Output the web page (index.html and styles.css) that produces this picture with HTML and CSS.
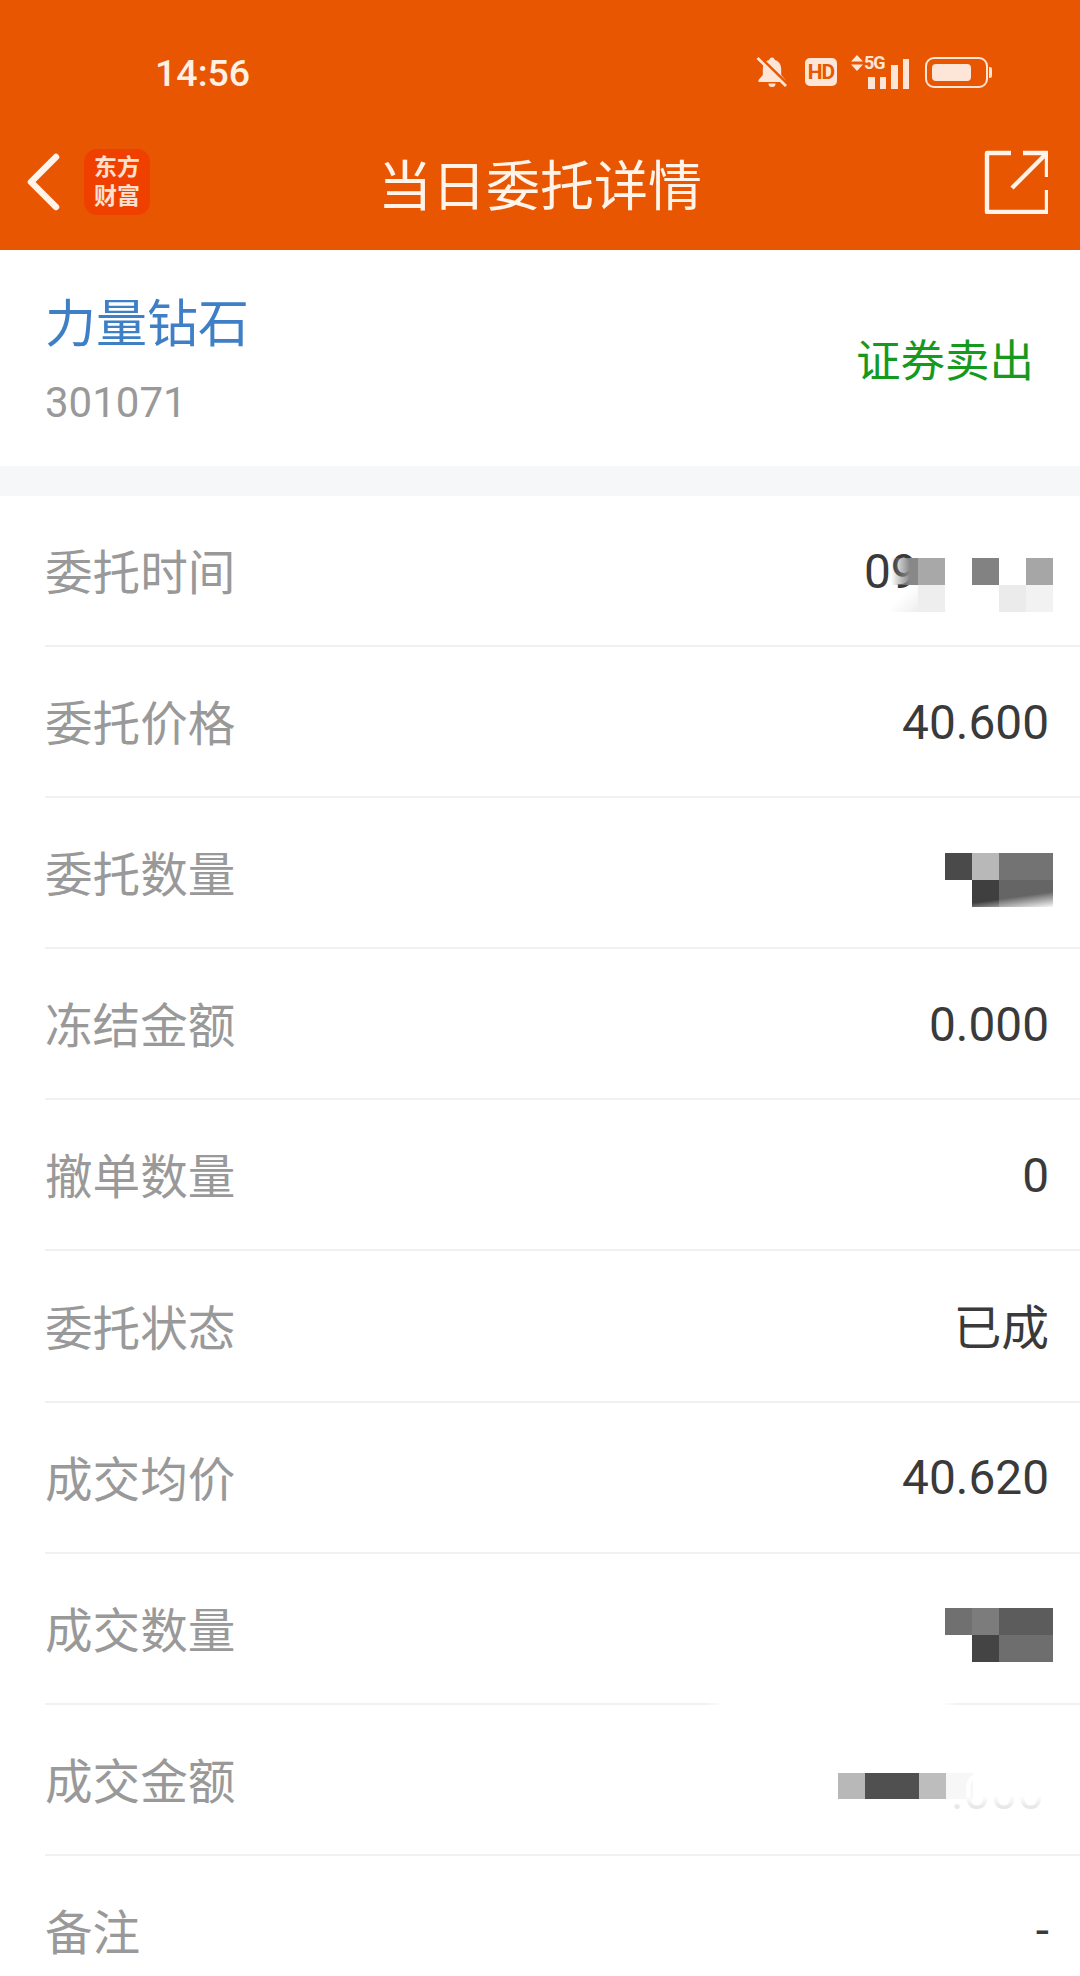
FILE: index.html
```html
<!DOCTYPE html>
<html lang="zh-CN">
  <head>
    <meta charset="UTF-8">
    <meta name="viewport" content="width=device-width, initial-scale=1.0">
    <link rel="stylesheet" href="styles.css">
    <title>当日委托详情</title>
  </head>
  <body>
    <div class="page">
      <header class="header">
        <div class="status">
          <span class="clock">14:56</span>
          <div class="status-icons">
            <svg class="ic-bell" width="32" height="32" viewBox="0 0 32 32">
              <path d="M16 1.500c-1.500 0-2.600 1-2.800 2.400C9 5 6.800 8.500 6.800 13v6L2.500 24v2h27v-2l-4.300-5v-6c0-4.500-2.200-8-6.400-9.100-.2-1.400-1.300-2.400-2.800-2.400z" fill="#fde5d8"/>
              <path d="M12.500 27.500h7a3.500 3.500 0 0 1-7 0z" fill="#fde5d8"/>
              <path d="M3.500 1l28 27" stroke="#e85602" stroke-width="3"/>
              <path d="M1.500 2l28.500 28" stroke="#fde5d8" stroke-width="2.800"/>
            </svg>
            <span class="hd">HD</span>
            <div class="signal">
              <svg class="ic-arrows" width="16" height="16" viewBox="0 0 16 16">
                <path d="M8 0l6 6.500H2zM8 16l6-6.500H2z" fill="#fde5d8"/>
              </svg>
              <span class="net">5G</span>
              <div class="bars">
                <i class="bar b1"></i>
                <i class="bar b2"></i>
                <i class="bar b3"></i>
                <i class="bar b4"></i>
              </div>
            </div>
            <div class="battery">
              <div class="battery-body"><div class="battery-level"></div></div>
              <div class="battery-nub"></div>
            </div>
          </div>
        </div>
        <nav class="nav">
          <div class="nav-left">
            <svg class="ic-back" width="36" height="58" viewBox="0 0 36 58">
              <path d="M31 4L6 29l25 25" fill="none" stroke="#fff3ea" stroke-width="6.500" stroke-linecap="round" stroke-linejoin="round"/>
            </svg>
            <div class="logo"><span>东方</span><span>财富</span></div>
          </div>
          <h1 class="title">当日委托详情</h1>
          <div class="nav-right">
            <svg class="ic-share" width="64" height="64" viewBox="0 0 64 64">
              <path d="M27 3H3v59h60V40M39 3h24v24M63 3L28 38" fill="none" stroke="#fff3ea" stroke-width="4.400" stroke-linejoin="round"/>
            </svg>
          </div>
        </nav>
      </header>

      <section class="stock">
        <div>
          <h2 class="stock-name">力量钻石</h2>
          <p class="stock-code">301071</p>
        </div>
        <span class="stock-side">证券卖出</span>
      </section>
      <div class="band"></div>

      <ul class="rows">
        <li class="row">
          <span class="label">委托时间</span>
          <span class="value value-time">09
            <span class="mosaic mosaic-time">
              <i class="c c-fade"></i><i class="c c-a8"></i><i class="c"></i><i class="c c-82"></i><i class="c"></i><i class="c c-a6"></i>
              <i class="c c-fade2"></i><i class="c c-ee"></i><i class="c"></i><i class="c"></i><i class="c c-eb"></i><i class="c c-f2"></i>
            </span>
          </span>
        </li>
        <li class="row"><span class="label">委托价格</span><span class="value">40.600</span></li>
        <li class="row">
          <span class="label">委托数量</span>
          <span class="mosaic">
            <i class="c c-4a"></i><i class="c c-b8"></i><i class="c c-73"></i><i class="c c-73"></i>
            <i class="c"></i><i class="c c-blur"></i>
          </span>
        </li>
        <li class="row"><span class="label">冻结金额</span><span class="value">0.000</span></li>
        <li class="row"><span class="label">撤单数量</span><span class="value">0</span></li>
        <li class="row"><span class="label">委托状态</span><span class="value value-cjk">已成</span></li>
        <li class="row"><span class="label">成交均价</span><span class="value">40.620</span></li>
        <li class="row row-gap">
          <span class="label">成交数量</span>
          <span class="mosaic">
            <i class="c c-70"></i><i class="c c-7c"></i><i class="c c-5c"></i><i class="c c-5c"></i>
            <i class="c"></i><i class="c c-44"></i><i class="c c-6e"></i><i class="c c-6e"></i>
          </span>
        </li>
        <li class="row">
          <span class="label">成交金额</span>
          <span class="mosaic mosaic-line">
            <i class="c c-b8"></i><i class="c c-50"></i><i class="c c-50"></i><i class="c c-bd"></i><i class="c c-f7"></i>
            <span class="ghost">.000</span>
          </span>
        </li>
        <li class="row"><span class="label">备注</span><span class="value">-</span></li>
      </ul>
    </div>
  </body>
</html>
```

FILE: styles.css
```css
:root {
  --brand: #e85602;
  --tint: #fde5d8;
  --line: #f1f1f1;
}
* {
  margin: 0;
  padding: 0;
  box-sizing: border-box;
}
html,
body {
  height: 100%;
}
body {
  background: #fff;
  font-family: Roboto, "Noto Sans CJK SC", sans-serif;
}
.page {
  width: 1080px;
  height: 1976px;
  overflow: hidden;
}

.header {
  height: 250px;
  background: var(--brand);
  color: #fff3ea;
}
.status {
  height: 114px;
  padding: 30px 88px 0 155px;
  display: flex;
  align-items: center;
  justify-content: space-between;
}
.clock {
  margin-top: 2px;
  font-size: 37.500px;
  font-weight: 500;
  color: #fff0e4;
}
.status-icons {
  display: flex;
  align-items: center;
}
.hd {
  width: 32px;
  height: 28px;
  margin: 0 12px 0 17px;
  border-radius: 5px;
  background: var(--tint);
  color: var(--brand);
  font-size: 21px;
  font-weight: 700;
  line-height: 28px;
  text-align: center;
  letter-spacing: -1px;
}
.signal {
  position: relative;
  width: 60px;
  height: 34px;
  margin-right: 16px;
}
.ic-arrows {
  position: absolute;
  left: 0;
  top: 0;
}
.net {
  position: absolute;
  left: 15px;
  top: -2px;
  font-size: 18px;
  font-weight: 700;
  line-height: 20px;
  letter-spacing: -1px;
  color: var(--tint);
}
.bars {
  position: absolute;
  right: 0;
  bottom: 0;
  display: flex;
  align-items: flex-end;
  gap: 5px;
}
.bar {
  width: 6.500px;
  background: var(--tint);
}
.b1,
.b2 {
  height: 12px;
}
.b3 {
  height: 24px;
}
.b4 {
  height: 30px;
}
.battery {
  display: flex;
  align-items: center;
  gap: 1px;
}
.battery-body {
  width: 63px;
  height: 31px;
  padding: 5px;
  border: 2px solid var(--tint);
  border-radius: 9px;
}
.battery-level {
  width: 39px;
  height: 100%;
  background: var(--tint);
  border-radius: 4px;
}
.battery-nub {
  width: 3px;
  height: 11px;
  background: var(--tint);
  border-radius: 0 2px 2px 0;
}

.nav {
  height: 136px;
  display: grid;
  grid-template-columns: 1fr auto 1fr;
  align-items: center;
}
.nav-left {
  display: flex;
  align-items: center;
  padding-left: 25px;
  gap: 23px;
}
.logo {
  width: 66px;
  height: 66px;
  border-radius: 13px;
  background: #f04000;
  display: flex;
  flex-direction: column;
  align-items: center;
  justify-content: center;
  font-size: 23px;
  font-weight: 700;
  line-height: 29px;
  color: #fde0d0;
}
.title {
  font-size: 54px;
  font-weight: 400;
  color: #fff3ea;
}
.nav-right {
  display: flex;
  justify-content: flex-end;
  padding-right: 32px;
}

.stock {
  height: 216px;
  padding: 4px 46px 0 45px;
  display: flex;
  align-items: center;
  justify-content: space-between;
}
.stock-name {
  font-size: 51px;
  font-weight: 400;
  line-height: 72px;
  color: #3f7fc6;
}
.stock-code {
  margin-top: 14px;
  font-size: 42px;
  line-height: 56px;
  color: #999;
}
.stock-side {
  margin-top: -6px;
  font-size: 44.500px;
  color: #159a1e;
}
.band {
  height: 30px;
  background: #f5f7f9;
}

.rows {
  list-style: none;
}
.row {
  position: relative;
  height: 151.100px;
  padding: 0 31px 0 45px;
  display: flex;
  align-items: center;
  justify-content: space-between;
}
.row::after {
  content: "";
  position: absolute;
  left: 45px;
  right: 0;
  bottom: 0;
  height: 2px;
  background: var(--line);
}
.row-gap::after {
  background: linear-gradient(90deg, var(--line) 660px, #fff 680px, #fff 895px, var(--line) 915px);
}
.row:last-child::after {
  display: none;
}
.label {
  margin-bottom: 4px;
  font-size: 47.600px;
  color: #999;
}
.value {
  font-size: 47.800px;
  color: #3a3a3a;
}
.value-cjk {
  margin-bottom: 5px;
}
.value-time {
  position: relative;
  width: 185px;
}

.mosaic {
  display: grid;
  grid-template-columns: repeat(4, 27px);
  grid-auto-rows: 27px;
  margin: 12px -4px 0 0;
}
.mosaic-time {
  position: absolute;
  left: 27px;
  top: 14px;
  margin: 0;
  grid-template-columns: repeat(6, 27px);
}
.mosaic-line {
  position: relative;
  top: 6px;
  grid-template-columns: repeat(5, 27px);
  grid-auto-rows: 26px;
  margin: 0 76px 0 0;
}
.ghost {
  position: absolute;
  left: 113px;
  top: -8px;
  font-size: 47.800px;
  color: transparent;
  background: linear-gradient(180deg, #fff 55%, #e4e4e4 78%, #fff 90%);
  -webkit-background-clip: text;
  background-clip: text;
}
.c-fade {
  background: linear-gradient(90deg, rgba(136, 136, 136, 0), #888 70%);
}
.c-fade2 {
  background: linear-gradient(135deg, rgba(230, 230, 230, 0) 40%, #eee);
}
.c-blur {
  grid-column: span 3;
  background: linear-gradient(172deg, rgba(255, 255, 255, 0) 60%, rgba(255, 255, 255, 0.95) 100%), linear-gradient(90deg, #3f3f3f 33.300%, #656565 33.300%);
}
.c-a8 { background: #a8a8a8; }
.c-82 { background: #828282; }
.c-a6 { background: #a6a6a6; }
.c-ee { background: #eee; }
.c-eb { background: #ebebeb; }
.c-f2 { background: #f2f2f2; }
.c-4a { background: #4a4a4a; }
.c-b8 { background: #b8b8b8; }
.c-73 { background: #737373; }
.c-70 { background: #707070; }
.c-7c { background: #7c7c7c; }
.c-5c { background: #5c5c5c; }
.c-44 { background: #444; }
.c-6e { background: #6e6e6e; }
.c-50 { background: #505050; }
.c-bd { background: #bdbdbd; }
.c-f7 { background: #f7f7f7; }
```
